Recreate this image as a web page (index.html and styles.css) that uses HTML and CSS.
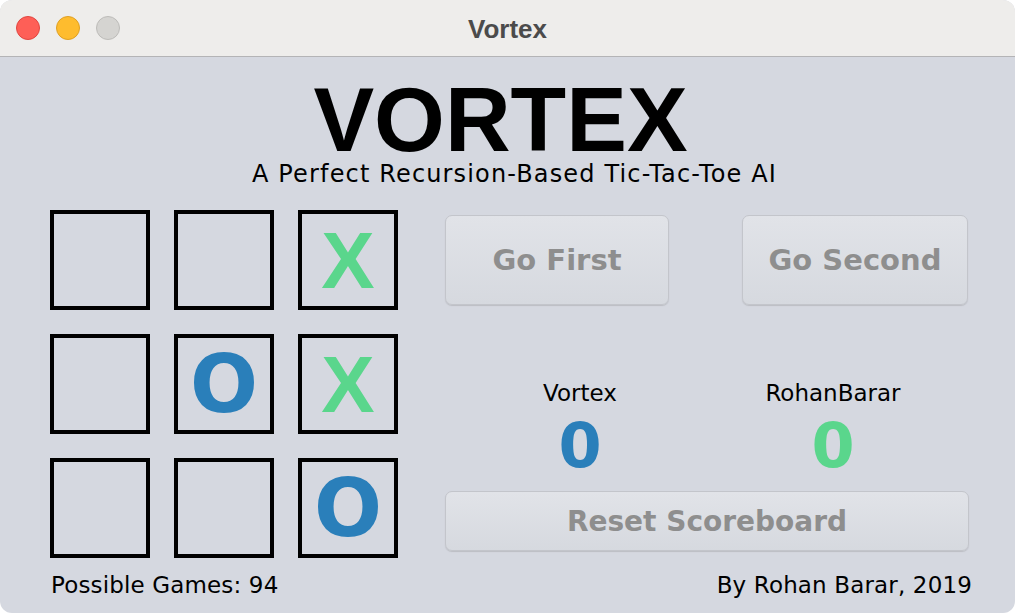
FILE: index.html
```html
<!DOCTYPE html>
<html>
<head>
<meta charset="utf-8">
<title>Vortex</title>
<link rel="stylesheet" href="styles.css">
</head>
<body>
<div class="window">
  <div class="titlebar">
    <div class="lights">
      <span class="light red"></span>
      <span class="light yellow"></span>
      <span class="light gray"></span>
    </div>
    <div class="wtitle">Vortex</div>
  </div>
  <div class="content">
    <h1 class="logo">VORTEX</h1>
    <p class="subtitle">A Perfect Recursion-Based Tic-Tac-Toe AI</p>
    <div class="main">
      <div class="board">
        <div class="cell"></div>
        <div class="cell"></div>
        <div class="cell"><span class="x">X</span></div>
        <div class="cell"></div>
        <div class="cell"><span class="o">O</span></div>
        <div class="cell"><span class="x">X</span></div>
        <div class="cell"></div>
        <div class="cell"></div>
        <div class="cell"><span class="o">O</span></div>
      </div>
      <div class="panel">
        <div class="startrow">
          <button class="btn first">Go First</button>
          <button class="btn second">Go Second</button>
        </div>
        <div class="scores">
          <div class="score">
            <div class="name">Vortex</div>
            <div class="num blue">0</div>
          </div>
          <div class="score">
            <div class="name">RohanBarar</div>
            <div class="num green">0</div>
          </div>
        </div>
        <button class="btn reset">Reset Scoreboard</button>
      </div>
    </div>
    <div class="footer">
      <span>Possible Games: 94</span>
      <span>By Rohan Barar, 2019</span>
    </div>
  </div>
</div>
</body>
</html>
```
FILE: styles.css
```css
html, body {
  margin: 0;
  padding: 0;
  background: #ffffff;
}
body {
  width: 1016px;
  height: 616px;
  overflow: hidden;
  font-family: "DejaVu Sans", "Liberation Sans", sans-serif;
}
.window {
  width: 1015px;
  height: 613px;
  border-radius: 12px;
  overflow: hidden;
  background: #d5d8e0;
  display: flex;
  flex-direction: column;
}
.titlebar {
  height: 56px;
  flex: none;
  background: #eeedeb;
  border-bottom: 1px solid #b4b4b6;
  display: flex;
  align-items: center;
  justify-content: center;
  position: relative;
}
.lights {
  position: absolute;
  left: 16px;
  top: 16px;
  display: flex;
  gap: 16px;
}
.light {
  width: 22px;
  height: 22px;
  border-radius: 50%;
  border: 1px solid transparent;
}
.light.red { background: #fe5f57; border-color: #e14640; }
.light.yellow { background: #febc2e; border-color: #dfa023; }
.light.gray { background: #d5d4d1; border-color: #bdbcb9; }
.wtitle {
  font-family: "Liberation Sans", Arial, sans-serif;
  font-weight: bold;
  font-size: 26px;
  color: #4b4b4b;
  margin-top: 2px;
}
.content {
  flex: 1;
  display: flex;
  flex-direction: column;
}
.logo {
  margin: 23px 0 0 -14px;
  font-family: "Liberation Sans", Arial, sans-serif;
  font-weight: bold;
  font-size: 91px;
  line-height: 80px;
  text-align: center;
  color: #000;
}
.subtitle {
  margin: 0 0 0 14px;
  font-size: 24px;
  line-height: 28px;
  letter-spacing: 1.15px;
  text-align: center;
  color: #000;
}
.main {
  display: flex;
  margin-top: 22px;
}
.board {
  margin-left: 50px;
  display: grid;
  grid-template-columns: repeat(3, 100px);
  grid-template-rows: repeat(3, 100px);
  gap: 24px;
}
.cell {
  box-sizing: border-box;
  border: 4px solid #000;
  display: flex;
  align-items: center;
  justify-content: center;
}
.x {
  font-family: "Liberation Sans", Arial, sans-serif;
  font-weight: bold;
  font-size: 80px;
  color: #5ad68c;
  line-height: 1;
  margin-top: 2px;
}
.o {
  font-family: "DejaVu Sans", sans-serif;
  font-weight: bold;
  font-size: 80px;
  color: #2a7fba;
  line-height: 1;
  margin-top: 2px;
}
.panel {
  margin-left: 47px;
  width: 524px;
  padding-top: 5px;
  display: flex;
  flex-direction: column;
}
.startrow {
  display: flex;
  justify-content: space-between;
}
.btn {
  box-sizing: border-box;
  font-family: "DejaVu Sans", sans-serif;
  font-weight: bold;
  color: #8e8e8e;
  background: linear-gradient(#e1e3e8, #d6d9df);
  border: 1px solid #c3c5cb;
  border-radius: 7px;
  box-shadow: 0 1px 1px #bcbec4;
  padding: 0;
  margin: 0;
}
.first, .second {
  height: 90px;
  font-size: 29px;
}
.first { width: 224px; }
.second { width: 226px; margin-right: 1px; }
.scores {
  display: grid;
  grid-template-columns: 270px 236px;
  margin-top: 75px;
  color: #000;
}
.score {
  text-align: center;
}
.name {
  font-size: 23px;
  line-height: 27px;
}
.num {
  font-weight: bold;
  font-size: 62px;
  line-height: 66px;
  margin-top: 6px;
}
.blue { color: #2a7fba; }
.green { color: #5ad68c; }
.reset {
  height: 60px;
  width: 524px;
  font-size: 28px;
  margin-top: 12px;
}
.footer {
  display: flex;
  justify-content: space-between;
  padding: 0 43px 0 51px;
  margin-top: 14px;
  font-size: 23px;
  line-height: 27px;
  letter-spacing: 0.15px;
  color: #000;
}
```
